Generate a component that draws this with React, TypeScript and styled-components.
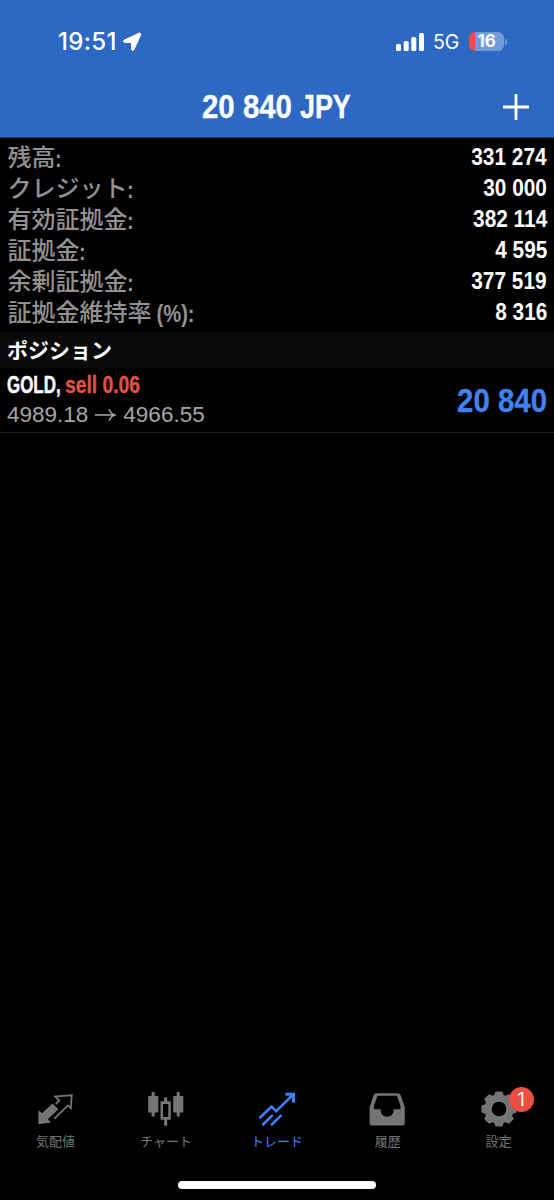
import React from 'react';
import styled, { createGlobalStyle } from 'styled-components';

const GlobalStyle = createGlobalStyle`
  * { box-sizing: border-box; }
  html, body { margin: 0; padding: 0; background: #000; }
`;

const sans = `"Liberation Sans", "Noto Sans CJK JP", sans-serif`;

const Screen = styled.div`
  width: 554px;
  height: 1200px;
  display: flex;
  flex-direction: column;
  background: #000;
  color: #fff;
  font-family: ${sans};
  overflow: hidden;
`;

const Header = styled.header`
  height: 138px;
  flex: none;
  background: #2d69c4;
  border-bottom: 1px solid #1c4078;
`;

const StatusBar = styled.div`
  height: 83px;
  padding: 0 47px 0 58px;
  display: flex;
  align-items: center;
  justify-content: space-between;
`;

const StatusGroup = styled.div<{ $gap: number }>`
  display: flex;
  align-items: center;
  gap: ${(p) => p.$gap}px;
`;

const Clock = styled.span`
  font: 500 24px/28px Inter, sans-serif;
  letter-spacing: 0.3px;
`;

const Network = styled.span`
  width: 27px;
  font: 400 19.5px/24px Inter, sans-serif;
  letter-spacing: -0.2px;
  white-space: nowrap;
`;

const Battery = styled.div`
  display: flex;
  align-items: center;
  gap: 1px;
`;

const BatteryBody = styled.div`
  width: 35px;
  height: 19px;
  border-radius: 6px;
  background: linear-gradient(90deg, #eb4f3d 0 6px, #719bd8 6px);
  font: 700 17px/19px Inter, sans-serif;
  letter-spacing: -0.3px;
  text-align: center;
`;

const BatteryTip = styled.div`
  width: 2px;
  height: 6px;
  border-radius: 0 2px 2px 0;
  background: #719bd8;
`;

const TitleBar = styled.div`
  height: 47px;
  padding: 0 25px 0 52px;
  display: grid;
  grid-template-columns: 1fr auto;
  align-items: center;
`;

const Condensed = styled.span<{
  $size: number;
  $ratio: number;
  $origin?: string;
  $color?: string;
  $stroke?: number;
}>`
  display: inline-block;
  font: 700 ${(p) => p.$size}px/1.2 ${sans};
  color: ${(p) => p.$color ?? '#fff'};
  -webkit-text-stroke: ${(p) => p.$stroke ?? 0}px currentColor;
  transform: scaleX(${(p) => p.$ratio});
  transform-origin: ${(p) => p.$origin ?? 'left'} center;
  white-space: pre;
`;

const Title = styled.h1`
  margin: 0;
  padding-right: 3px;
  display: flex;
  justify-content: center;
  gap: 7px;
`;

const TitlePart = styled.span<{ $width: number }>`
  width: ${(p) => p.$width}px;
`;

const Summary = styled.dl`
  margin: 0;
  padding: 3px 7px 0 8px;
  height: 194px;
  flex: none;
`;

const SummaryRow = styled.div`
  height: 31px;
  display: flex;
  align-items: center;
  justify-content: space-between;
`;

const Label = styled.dt`
  display: flex;
  height: 32px;
  margin-left: -0.5px;
  font: 500 24px/30px "Noto Sans CJK JP", sans-serif;
  color: #929292;
  white-space: pre;
`;

const Suffix = styled.span`
  margin: 1px 0 0 -1px;
`;

const Value = styled.dd`
  margin: 0;
  padding-top: 1px;
`;

const SectionTitle = styled.h2`
  margin: 0;
  height: 36px;
  flex: none;
  padding: 0 7px;
  background: #0a0a0a;
  font: 700 21px/35px "Noto Sans CJK JP", sans-serif;
`;

const Position = styled.div`
  height: 65px;
  flex: none;
  padding: 3px 7px 0 7px;
  border-bottom: 1px solid #1d1d1d;
  display: flex;
  justify-content: space-between;
`;

const PositionInfo = styled.div`
  display: flex;
  flex-direction: column;
`;

const Symbol = styled.div`
  height: 29px;
  display: flex;
  white-space: nowrap;
`;

const Instrument = styled.span`
  width: 58px;
`;

const Prices = styled.div`
  display: flex;
  align-items: center;
  gap: 7px;
  height: 30px;
  font: 400 22.5px/30px ${sans};
  color: #a6a6a6;
`;

const Profit = styled.div`
  padding-top: 9px;
`;

const Spacer = styled.div`
  flex: 1;
`;

const TabBar = styled.nav`
  height: 87px;
  flex: none;
  display: grid;
  grid-template-columns: repeat(5, 1fr);
`;

const Tab = styled.div<{ $active?: boolean }>`
  display: flex;
  flex-direction: column;
  align-items: center;
  color: ${(p) => (p.$active ? '#3b82f6' : '#757575')};
`;

const TabIcon = styled.div`
  position: relative;
  width: 40px;
  height: 40px;
  svg { display: block; }
`;

const TabLabel = styled.span`
  margin-top: 2px;
  font: 400 13px/20px "Noto Sans CJK JP", sans-serif;
  white-space: nowrap;
`;

const Badge = styled.span`
  position: absolute;
  left: 30px;
  top: -2px;
  width: 25px;
  height: 25px;
  border-radius: 50%;
  background: #eb4f43;
  color: #fff;
  font: 400 18px/25px Inter, sans-serif;
  text-align: center;
`;

const HomeArea = styled.div`
  height: 24px;
  flex: none;
  display: flex;
  justify-content: center;
  padding-top: 5px;
`;

const HomeIndicator = styled.div`
  width: 198px;
  height: 8px;
  border-radius: 4px;
  background: #fff;
`;

const summary: { label: string; suffix: string; value: string }[] = [
  { label: '残高', suffix: ':', value: '331 274' },
  { label: 'クレジット', suffix: ':', value: '30 000' },
  { label: '有効証拠金', suffix: ':', value: '382 114' },
  { label: '証拠金', suffix: ':', value: '4 595' },
  { label: '余剰証拠金', suffix: ':', value: '377 519' },
  { label: '証拠金維持率', suffix: ' (%):', value: '8 316' },
];

const LocationIcon = () => (
  <svg width="20" height="20" viewBox="0 0 20 20" fill="#fff" stroke="#fff" strokeWidth="1" strokeLinejoin="round">
    <path d="M18.5 1.3c.5.5.4 1 .1 1.600l-6.700 14.800c-.6 1.300-2.200 1.100-2.300-.5l-.2-6.600-6.500-.2c-1.600-.1-1.900-1.700-.5-2.300L16.900 1.200c.6-.3 1.200-.3 1.600.1z" />
  </svg>
);

const SignalIcon = () => (
  <svg width="28" height="18" viewBox="0 0 28 18" fill="#fff">
    <rect x="0" y="11" width="5" height="7" rx="1.5" />
    <rect x="7.7" y="8" width="5" height="10" rx="1.5" />
    <rect x="15.3" y="4" width="5" height="14" rx="1.5" />
    <rect x="23" y="0" width="5" height="18" rx="1.5" />
  </svg>
);

const PlusIcon = () => (
  <svg width="26" height="26" viewBox="0 0 26 26" stroke="#fff" strokeWidth="2.8">
    <path d="M13 0v26M0 13h26" />
  </svg>
);

const ArrowIcon = () => (
  <svg width="21" height="14" viewBox="0 0 21 14" fill="none" stroke="#a6a6a6" strokeWidth="1.4">
    <path d="M0 7h19.5M14 1.2c1.200 3 3 5 6 5.800-3 .8-4.800 2.800-6 5.800" />
  </svg>
);

const QuotesIcon = () => (
  <svg width="40" height="40" viewBox="0 0 40 40" fill="none">
    <path d="M3.400 35.200V21.200l3.700 3 10.400-9.700 5.800 5.800-10.500 9.900 3.200 3.300z" fill="currentColor" />
    <path
      d="M20.800 15l3.600-3.500-4.100-4.100L36.700 6.300l-.9 13-2.900-2.900L19.200 29.800"
      stroke="currentColor"
      strokeWidth="1.800"
    />
  </svg>
);

const ChartIcon = () => (
  <svg width="40" height="40" viewBox="0 0 40 40" fill="currentColor">
    <path d="M5.600 3h3.100v4h3.600v16.500H8.700v4H5.600v-4H2.200V7h3.400zM30.700 3h3.100v4h3.500v16.500h-3.500v4h-3.100v-4h-3.500V7h3.500z" />
    <path fillRule="evenodd" d="M18.100 8.300h3.100v4h3.600v18.500h-3.600v6h-3.100v-6h-3.600V12.300h3.600zM17 15v13h5.300V15z" />
  </svg>
);

const TradeIcon = () => (
  <svg width="40" height="40" viewBox="0 0 40 40" fill="none" stroke="currentColor" strokeWidth="2.500">
    <path d="M3.200 28.500l11.300-11 4.700 4.700L36.300 5.300" strokeLinecap="round" />
    <path d="M28.500 5.200h8v8.500" strokeWidth="3" />
    <path d="M6 35.500l9-8.800M14.800 35.500l9-8.800" strokeLinecap="round" />
  </svg>
);

const HistoryIcon = () => (
  <svg width="40" height="40" viewBox="0 0 40 40">
    <path
      fill="currentColor"
      fillRule="evenodd"
      transform="translate(-.8 .8)"
      d="M10 3.500h20c2 0 3.100.8 3.700 2.500l3.900 11.500V33c0 1.900-.9 2.800-2.800 2.800H5.200c-1.900 0-2.800-.9-2.800-2.800V17.500L6.300 6c.6-1.700 1.700-2.500 3.700-2.500zM10.300 6L6.700 16.500v3h7v1.300c0 3.700 2.600 6.200 6.300 6.200s6.300-2.500 6.300-6.200v-1.300h7v-3L29.700 6z"
    />
  </svg>
);

const gearOutline = (() => {
  const points: string[] = [];
  for (let i = 0; i < 8; i += 1) {
    const base = (i * Math.PI) / 4 - Math.PI / 2;
    [[-0.27, 13.6], [-0.16, 16.6], [0.16, 16.6], [0.27, 13.6]].forEach(([a, r]) => {
      points.push(`${(20 + r * Math.cos(base + a)).toFixed(2)} ${(20 + r * Math.sin(base + a)).toFixed(2)}`);
    });
  }
  return `M${points.join('L')}Z`;
})();

const SettingsIcon = () => (
  <svg width="40" height="40" viewBox="0 0 40 40">
    <path
      d={`${gearOutline}M27.300 20a7.300 7.300 0 1 0-14.600 0a7.300 7.300 0 1 0 14.600 0Z`}
      fill="currentColor"
      fillRule="evenodd"
    />
    <path d={gearOutline} fill="none" stroke="currentColor" strokeWidth="2.400" strokeLinejoin="round" />
  </svg>
);

const tabs = [
  { label: '気配値', Icon: QuotesIcon },
  { label: 'チャート', Icon: ChartIcon },
  { label: 'トレード', Icon: TradeIcon, active: true },
  { label: '履歴', Icon: HistoryIcon },
  { label: '設定', Icon: SettingsIcon, badge: '1' },
];

export default function App() {
  return (
    <Screen>
      <GlobalStyle />
      <Header>
        <StatusBar>
          <StatusGroup $gap={5}>
            <Clock>19:51</Clock>
            <LocationIcon />
          </StatusGroup>
          <StatusGroup $gap={9}>
            <SignalIcon />
            <Network>5G</Network>
            <Battery>
              <BatteryBody>16</BatteryBody>
              <BatteryTip />
            </Battery>
          </StatusGroup>
        </StatusBar>
        <TitleBar>
          <Title>
            <TitlePart $width={91}>
              <Condensed $size={34} $ratio={0.865} $stroke={0.3}>20 840</Condensed>
            </TitlePart>
            <TitlePart $width={50}>
              <Condensed $size={34} $ratio={0.79} $stroke={0.4}>JPY</Condensed>
            </TitlePart>
          </Title>
          <PlusIcon />
        </TitleBar>
      </Header>
      <Summary>
        {summary.map((row) => (
          <SummaryRow key={row.label}>
            <Label>
              {row.label}
              <Suffix>
                <Condensed $size={24.5} $ratio={0.82} $color="#929292">{row.suffix}</Condensed>
              </Suffix>
            </Label>
            <Value>
              <Condensed $size={24.5} $ratio={0.85} $origin="right">{row.value}</Condensed>
            </Value>
          </SummaryRow>
        ))}
      </Summary>
      <SectionTitle>ポジション</SectionTitle>
      <Position>
        <PositionInfo>
          <Symbol>
            <Instrument>
              <Condensed $size={23.5} $ratio={0.72} $stroke={0.5}>GOLD,</Condensed>
            </Instrument>
            <Condensed $size={23.5} $ratio={0.82} $stroke={0.3} $color="#e25241">sell 0.06</Condensed>
          </Symbol>
          <Prices>
            <span>4989.18</span>
            <ArrowIcon />
            <span>4966.55</span>
          </Prices>
        </PositionInfo>
        <Profit>
          <Condensed $size={34} $ratio={0.865} $origin="right" $stroke={0.3} $color="#3f83f7">20 840</Condensed>
        </Profit>
      </Position>
      <Spacer />
      <TabBar>
        {tabs.map(({ label, Icon, active, badge }) => (
          <Tab key={label} $active={active}>
            <TabIcon>
              <Icon />
              {badge && <Badge>{badge}</Badge>}
            </TabIcon>
            <TabLabel>{label}</TabLabel>
          </Tab>
        ))}
      </TabBar>
      <HomeArea>
        <HomeIndicator />
      </HomeArea>
    </Screen>
  );
}
